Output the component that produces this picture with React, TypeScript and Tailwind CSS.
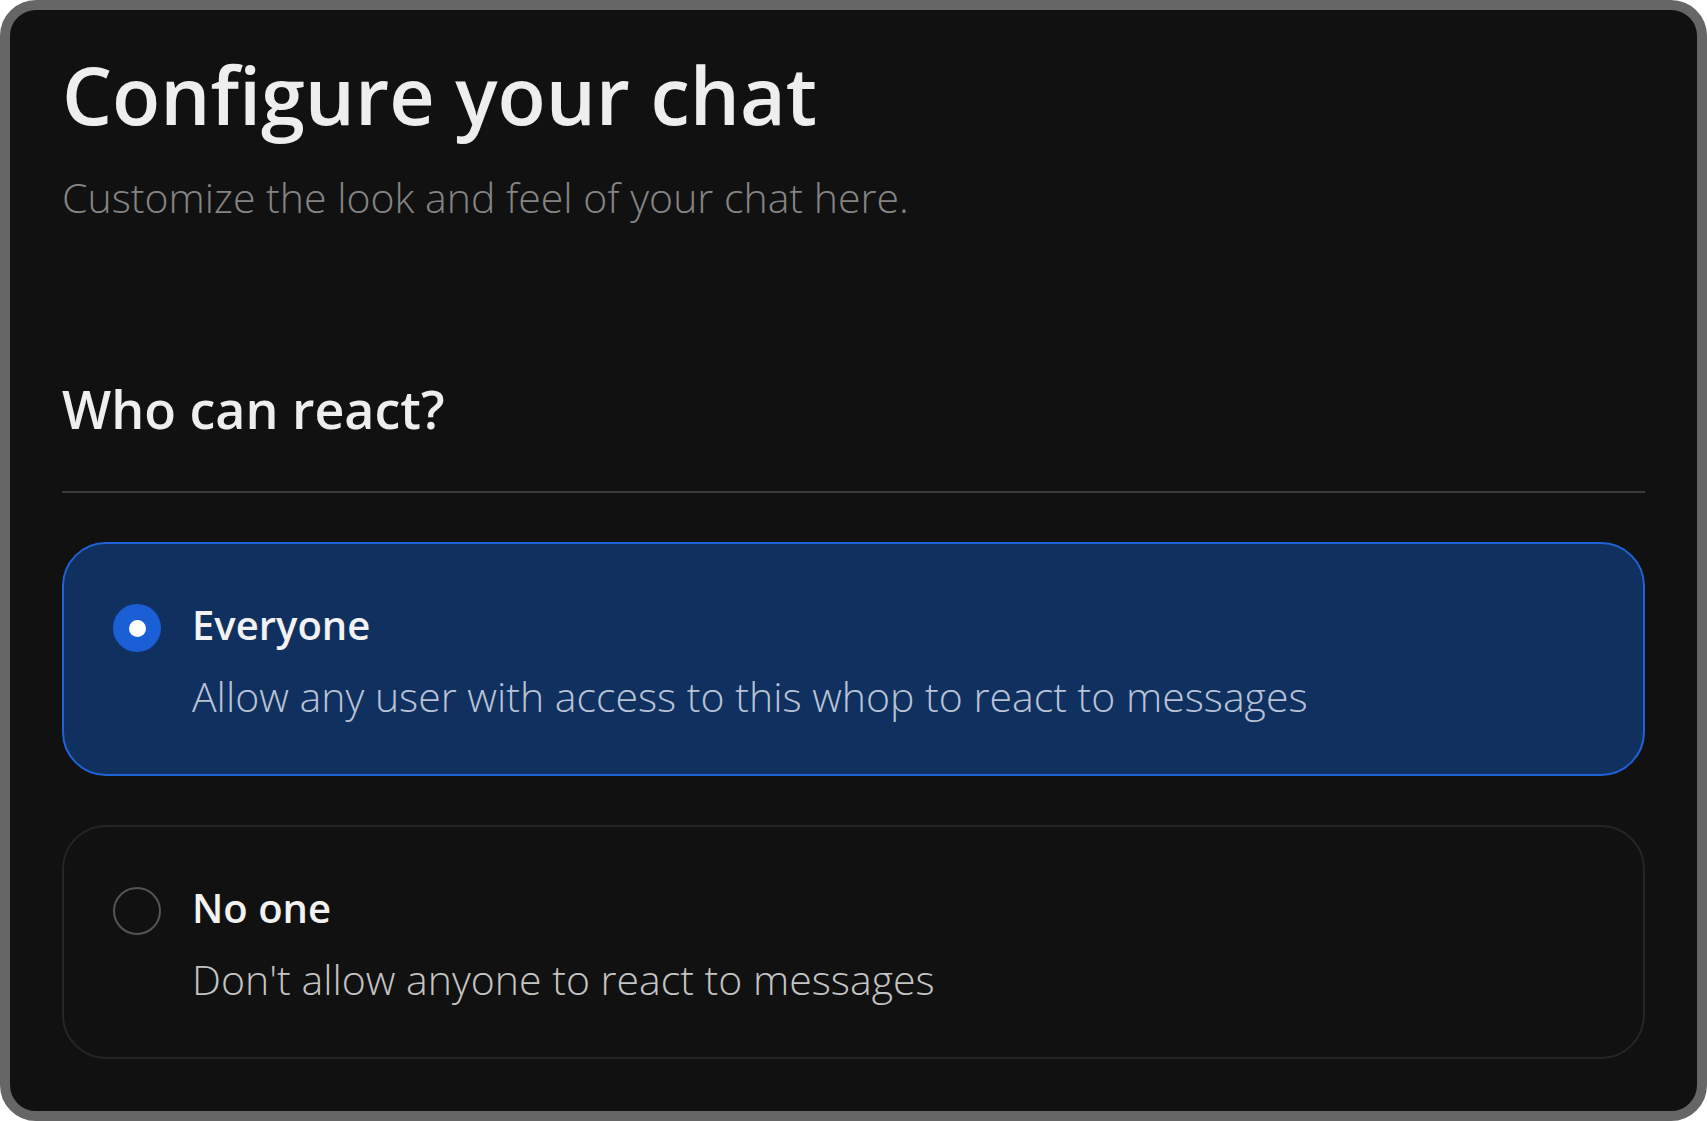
import { useState } from 'react'

const OPTIONS = [
    { id: 'everyone', title: 'Everyone', desc: 'Allow any user with access to this whop to react to messages' },
    { id: 'none', title: 'No one', desc: "Don't allow anyone to react to messages" },
]

export default function App() {
    const [selected, setSelected] = useState('everyone')

    return (
        <div className="h-[1121px] w-full bg-white font-['Open_Sans',sans-serif]">
            <div className="h-full rounded-[36px] border-[10px] border-[#666666] bg-[#111111] px-[52px] pt-[38px]">
                {/* Header */}
                <h1 className="text-[79px] font-semibold leading-[1.2] text-[#eeeeee]">Configure your chat</h1>
                <p className="mt-[30px] text-[41px] font-light leading-[1.2] text-[#858585]">Customize the look and feel of your chat here.</p>

                {/* Section */}
                <h2 className="mt-[156px] text-[52px] font-semibold leading-[1.2] text-[#eeeeee]">Who can react?</h2>
                <div className="mt-[51px] h-[2px] bg-[#3a3a3a]" />

                <div className="mt-[49px] flex flex-col gap-[49px]">
                    {OPTIONS.map((o) => {
                        const active = selected === o.id
                        return (
                            <button
                                key={o.id}
                                onClick={() => setSelected(o.id)}
                                className={`flex h-[234px] items-start gap-[31px] rounded-[44px] border-2 px-[49px] pt-[57px] text-left ${active ? 'border-[#1f63d8] bg-[#10305f]' : 'border-[#262626] bg-[#111111]'}`}
                            >
                                <span className={`mt-[3px] flex h-[48px] w-[48px] shrink-0 items-center justify-center rounded-full ${active ? 'bg-[#1a5fd6]' : 'border-2 border-[#555555]'}`}>
                                    {active && <span className="h-[17px] w-[17px] rounded-full bg-white" />}
                                </span>
                                <span className="flex flex-col">
                                    <span className="text-[40px] font-semibold leading-[1.2] text-[#f2f2f2]">{o.title}</span>
                                    <span className={`mt-[23px] text-[41px] font-light leading-[1.2] ${active ? 'text-[#b9c3d6]' : 'text-[#c4c4c4]'}`}>{o.desc}</span>
                                </span>
                            </button>
                        )
                    })}
                </div>
            </div>
        </div>
    )
}
